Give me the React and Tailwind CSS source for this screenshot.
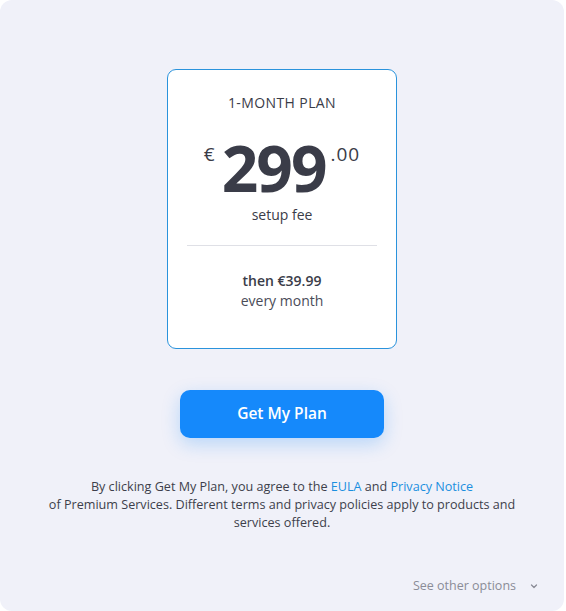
import React from 'react';

// Tarjeta de plan con precio y botón de compra
function PlanCard() {
    return (
        <div className="w-[230px] h-[280px] bg-white border border-[#2a93dc] rounded-[9px] flex flex-col items-center pt-[25px]">
            <div className="text-[14px] leading-[16px] font-medium tracking-[0.4px] text-[#3a3c48]">1-MONTH PLAN</div>

            <div className="flex items-start mt-[25px] text-[#3a3c48]">
                <span className="text-[19px] leading-[19px] mt-[9px] mr-[7px]">€</span>
                <span className="text-[64px] leading-[64px] font-bold tracking-[-2px]">299</span>
                <span className="text-[19px] leading-[19px] mt-[9px] ml-[5px] tracking-[1px]">.00</span>
            </div>

            <div className="text-[14px] leading-[16px] font-medium text-[#3a3c48] mt-[7px]">setup fee</div>

            <div className="w-[190px] h-px bg-[#dfe0e6] mt-[22px]"></div>

            <div className="text-[14px] leading-[18px] font-semibold text-[#3a3c48] mt-[26px]">then €39.99</div>
            <div className="text-[14px] leading-[18px] text-[#4a4c58] mt-[2px]">every month</div>
        </div>
    );
}

export default function App() {
    return (
        <div className="w-[566px] h-[611px] bg-white" style={{ fontFamily: '"Open Sans", "Noto Sans", sans-serif' }}>
            <div className="w-[564px] h-[611px] bg-[#f0f1f9] rounded-[12px] flex flex-col items-center pt-[69px]">
                <PlanCard />

                <button className="mt-[41px] w-[204px] h-[48px] rounded-[10px] bg-[#1589fb] text-white text-[15.5px] font-semibold shadow-[0_6px_18px_rgba(21,137,251,0.25)]">
                    Get My Plan
                </button>

                <p className="mt-[40px] w-[490px] text-center text-[12.6px] leading-[18px] text-[#3d3f4b]">
                    By clicking Get My Plan, you agree to the <span className="text-[#1b8fdf]">EULA</span> and <span className="text-[#1b8fdf]">Privacy Notice</span>
                    <br />
                    of Premium Services. Different terms and privacy policies apply to products and
                    <br />
                    services offered.
                </p>

                <div className="mt-auto mb-[17px] self-end mr-[26px] flex items-center gap-[14px] text-[12.5px] leading-[16px] text-[#8a8c97]">
                    <span>See other options</span>
                    <svg width="8" height="6" viewBox="0 0 8 6" fill="none" stroke="#8a8c97" strokeWidth="1.3" strokeLinecap="round" strokeLinejoin="round">
                        <path d="M1.5 2l2.5 2.5L6.5 2" />
                    </svg>
                </div>
            </div>
        </div>
    );
}
